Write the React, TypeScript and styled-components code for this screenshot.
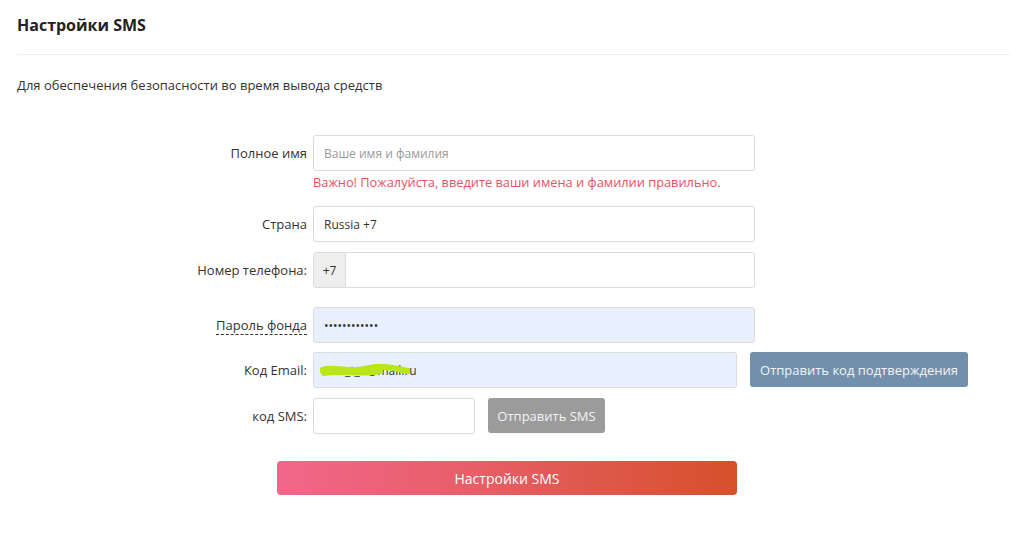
import React from "react";
import styled, { createGlobalStyle } from "styled-components";

const GlobalStyle = createGlobalStyle`
  html, body {
    margin: 0;
    padding: 0;
    background: #fff;
    font-family: "Open Sans", "Noto Sans", sans-serif;
    color: #333;
  }
  * { box-sizing: border-box; }
`;

const Page = styled.div`
  padding: 0 14px 0 17px;
`;

const Title = styled.h1`
  margin: 0;
  padding-top: 15px;
  font-size: 16px;
  line-height: 20px;
  font-weight: 700;
  color: #222;
`;

const Divider = styled.div`
  margin-top: 19px;
  height: 1px;
  background: #f0f0f0;
`;

const Subtitle = styled.p`
  margin: 21px 0 0;
  font-size: 13px;
  line-height: 18px;
  color: #333;
`;

const Form = styled.form`
  margin-top: 41px;
  display: flex;
  flex-direction: column;
`;

const Row = styled.div<{ $gap: number }>`
  display: flex;
  align-items: flex-start;
  gap: 6px;
  margin-bottom: ${(p) => p.$gap}px;
`;

const Label = styled.label<{ $dashed?: boolean }>`
  width: 290px;
  flex: none;
  display: flex;
  justify-content: flex-end;
  align-items: center;
  height: 36px;
  font-size: 13px;
  color: #333;

  span {
    border-bottom: ${(p) => (p.$dashed ? "1px dashed #333" : "none")};
    line-height: 17px;
    padding-top: ${(p) => (p.$dashed ? "2px" : "0")};
  }
`;

const Field = styled.div`
  display: flex;
  flex-direction: column;
`;

const Input = styled.input<{ $w: number; $filled?: boolean }>`
  width: ${(p) => p.$w}px;
  height: 36px;
  border: 1px solid #dcdcdc;
  border-radius: 3px;
  padding: 0 10px;
  font-family: inherit;
  font-size: 12px;
  color: #333;
  background: ${(p) => (p.$filled ? "#e8f0fe" : "#fff")};
  outline: none;

  &::placeholder {
    color: #999;
  }
`;

const Hint = styled.div`
  margin-top: 3px;
  font-size: 12.8px;
  line-height: 17px;
  color: #e8515f;
`;

const Group = styled.div`
  display: flex;
  width: 442px;
  height: 36px;
  border: 1px solid #dcdcdc;
  border-radius: 3px;
  overflow: hidden;
`;

const Addon = styled.span`
  width: 32px;
  flex: none;
  display: flex;
  align-items: center;
  justify-content: center;
  background: #eee;
  border-right: 1px solid #dcdcdc;
  font-size: 12px;
  color: #333;
`;

const GroupInput = styled.input`
  flex: 1;
  border: 0;
  outline: none;
  font-family: inherit;
`;

const EmailWrap = styled.div`
  position: relative;
`;

const Scribble = styled.svg`
  position: absolute;
  left: 7px;
  top: 9px;
  pointer-events: none;
`;

const Button = styled.button<{ $bg: string; $w: number }>`
  margin-left: 7px;
  width: ${(p) => p.$w}px;
  height: 35px;
  border: 0;
  border-radius: 3px;
  background: ${(p) => p.$bg};
  color: #f4f4f4;
  font-family: inherit;
  font-size: 13px;
  cursor: pointer;
`;

const Submit = styled.button`
  margin: 27px 0 0 260px;
  width: 460px;
  height: 34px;
  border: 0;
  border-radius: 4px;
  background: linear-gradient(90deg, #f2668a 0%, #e85f6a 40%, #d6502a 100%);
  color: #fff;
  font-family: inherit;
  font-size: 14px;
  cursor: pointer;
`;

export default function App() {
  return (
    <>
      <GlobalStyle />
      <Page>
        <Title>Настройки SMS</Title>
        <Divider />
        <Subtitle>Для обеспечения безопасности во время вывода средств</Subtitle>
        <Form onSubmit={(e) => e.preventDefault()}>
          <Row $gap={15}>
            <Label>
              <span>Полное имя</span>
            </Label>
            <Field>
              <Input $w={442} placeholder="Ваше имя и фамилия" />
              <Hint>Важно! Пожалуйста, введите ваши имена и фамилии правильно.</Hint>
            </Field>
          </Row>
          <Row $gap={10}>
            <Label>
              <span>Страна</span>
            </Label>
            <Input $w={442} defaultValue="Russia +7" />
          </Row>
          <Row $gap={19}>
            <Label>
              <span>Номер телефона:</span>
            </Label>
            <Group>
              <Addon>+7</Addon>
              <GroupInput />
            </Group>
          </Row>
          <Row $gap={9}>
            <Label $dashed>
              <span>Пароль фонда</span>
            </Label>
            <Input $w={442} $filled type="password" defaultValue="123456789012" />
          </Row>
          <Row $gap={10}>
            <Label>
              <span>Код Email:</span>
            </Label>
            <EmailWrap>
              <Input $w={424} $filled defaultValue="i0m_t_4@mail.ru" />
              <Scribble width="90" height="18" viewBox="0 0 90 18">
                <path
                  d="M2 9 C 15 5, 30 12, 45 8 S 70 6, 88 10 M4 12 C 20 9, 40 14, 60 10"
                  stroke="#b8e616"
                  strokeWidth="6"
                  fill="none"
                  strokeLinecap="round"
                />
              </Scribble>
            </EmailWrap>
            <Button type="button" $bg="#7190ad" $w={218}>
              Отправить код подтверждения
            </Button>
          </Row>
          <Row $gap={0}>
            <Label>
              <span>код SMS:</span>
            </Label>
            <Input $w={162} />
            <Button type="button" $bg="#9b9b9b" $w={117}>
              Отправить SMS
            </Button>
          </Row>
          <Submit type="submit">Настройки SMS</Submit>
        </Form>
      </Page>
    </>
  );
}
